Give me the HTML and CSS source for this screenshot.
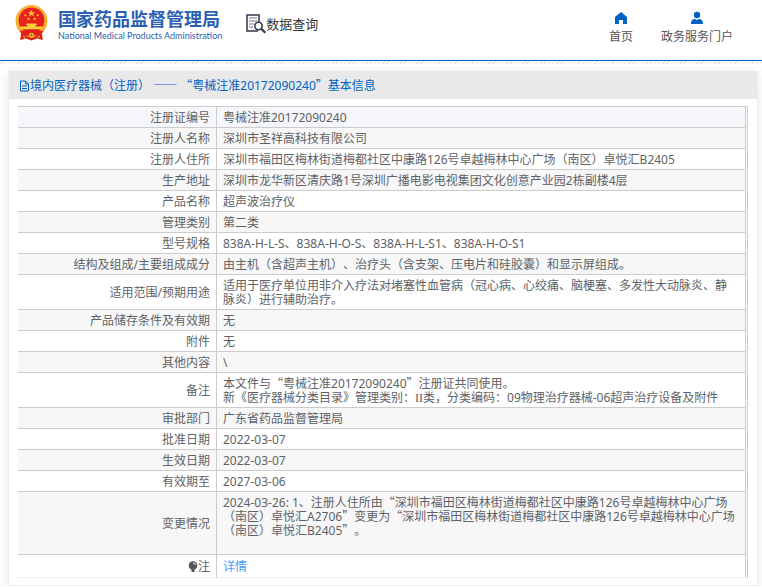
FILE: index.html
```
<!DOCTYPE html>
<html lang="zh-CN">
<head>
    <meta charset="UTF-8">
    <title>国家药品监督管理局 数据查询</title>
    <link rel="stylesheet" href="styles.css">
</head>
<body>
<header class="header">
    <a class="logo" href="#">
        <svg class="emblem" viewBox="0 0 64 70" aria-hidden="true">
            <path d="M12 54 L10 68 L22 65 L32 69 L42 65 L54 68 L52 54 Z" fill="#e0201b"/>
            <circle cx="32" cy="31" r="31" fill="#f3b632"/>
            <circle cx="32" cy="31" r="29" fill="none" stroke="#eda52c" stroke-width="2" stroke-dasharray="3 3"/>
            <circle cx="32" cy="30" r="25" fill="#e8211c"/>
            <path d="M32 9l2 5h5l-4 3 2 5-5-3-5 3 2-5-4-3h5z" fill="#f9cf3c"/>
            <g fill="#f9cf3c">
                <circle cx="20" cy="20" r="2"/>
                <circle cx="26" cy="27" r="2"/>
                <circle cx="38" cy="27" r="2"/>
                <circle cx="44" cy="20" r="2"/>
                <path d="M23 36h18l2 3h-3v3h13v5H11v-5h13v-3h-3z"/>
            </g>
            <path d="M9 50h46l-5 10H14z" fill="#e0201b"/>
            <circle cx="32" cy="59" r="5" fill="#f3b632"/>
            <circle cx="32" cy="59" r="2" fill="#e0201b"/>
            <path d="M16 60l4 5M48 60l-4 5" fill="none" stroke="#f3b632" stroke-width="2"/>
        </svg>
        <span class="logo-text">
            <strong class="logo-cn">国家药品监督管理局</strong>
            <span class="logo-en">National Medical Products Administration</span>
        </span>
    </a>
    <a class="search-title" href="#">
        <svg class="search-icon" viewBox="0 0 20 20" aria-hidden="true">
            <path d="M12 17H1V1h12v7" fill="none" stroke="#34344e" stroke-width="1.5"/>
            <path d="M3 4h8M3 7h8M3 10h5M3 13h4" stroke="#77778a" stroke-width="1.2"/>
            <circle cx="12.5" cy="12" r="3.7" fill="#fff" stroke="#34344e" stroke-width="1.6"/>
            <path d="M15.3 14.8l4 4" stroke="#34344e" stroke-width="2.2"/>
        </svg>
        <span>数据查询</span>
    </a>
    <nav class="nav">
        <a href="#">
            <svg class="nav-icon" viewBox="0 0 14 14" aria-hidden="true">
                <path d="M7 1l6 5v7H9V9H5v4H1V6z" fill="#0062c4"/>
            </svg>
            首页
        </a>
        <a href="#">
            <svg class="nav-icon" viewBox="0 0 14 14" aria-hidden="true">
                <circle cx="7" cy="4" r="3.2" fill="#0062c4"/>
                <path d="M1 13c0-4 2-5 4-5l2 1 2-1c2 0 4 1 4 5z" fill="#0062c4"/>
            </svg>
            政务服务门户
        </a>
    </nav>
</header>
<div class="stripe"></div>

<main class="card">
    <h1 class="card-title">
        <svg class="doc-icon" viewBox="0 0 11 12" aria-hidden="true">
            <path d="M1.5 1h5l3 3v7h-8zM6.5 1v3h3M3 6h5M3 8.500h5" fill="none" stroke="#0062c4"/>
        </svg>
        <span>境内医疗器械（注册） <span class="cjk">——</span> <span class="cjk">“</span>粤械注准20172090240<span class="cjk">”</span>基本信息</span>
    </h1>
    <div class="card-body">
        <table class="info">
            <tbody>
                <tr><th scope="row">注册证编号</th><td>粤械注准20172090240</td></tr>
                <tr><th scope="row">注册人名称</th><td>深圳市圣祥高科技有限公司</td></tr>
                <tr><th scope="row">注册人住所</th><td>深圳市福田区梅林街道梅都社区中康路126号卓越梅林中心广场（南区）卓悦汇B2405</td></tr>
                <tr><th scope="row">生产地址</th><td>深圳市龙华新区清庆路1号深圳广播电影电视集团文化创意产业园2栋副楼4层</td></tr>
                <tr><th scope="row">产品名称</th><td>超声波治疗仪</td></tr>
                <tr><th scope="row">管理类别</th><td>第二类</td></tr>
                <tr><th scope="row">型号规格</th><td>838A-H-L-S、838A-H-O-S、838A-H-L-S1、838A-H-O-S1</td></tr>
                <tr><th scope="row">结构及组成/主要组成成分</th><td>由主机（含超声主机）、治疗头（含支架、压电片和硅胶囊）和显示屏组成。</td></tr>
                <tr><th scope="row">适用范围/预期用途</th><td>适用于医疗单位用非介入疗法对堵塞性血管病（冠心病、心绞痛、脑梗塞、多发性大动脉炎、静脉炎）进行辅助治疗。</td></tr>
                <tr><th scope="row">产品储存条件及有效期</th><td>无</td></tr>
                <tr><th scope="row">附件</th><td>无</td></tr>
                <tr><th scope="row">其他内容</th><td>\</td></tr>
                <tr><th scope="row">备注</th><td>本文件与<span class="cjk">“</span>粤械注准20172090240<span class="cjk">”</span>注册证共同使用。<br>新《医疗器械分类目录》管理类别：<span class="roman">II</span>类，分类编码：09物理治疗器械-06超声治疗设备及附件</td></tr>
                <tr><th scope="row">审批部门</th><td>广东省药品监督管理局</td></tr>
                <tr><th scope="row">批准日期</th><td>2022-03-07</td></tr>
                <tr><th scope="row">生效日期</th><td>2022-03-07</td></tr>
                <tr><th scope="row">有效期至</th><td>2027-03-06</td></tr>
                <tr><th scope="row">变更情况</th><td>2024-03-26: 1、注册人住所由<span class="cjk">“</span>深圳市福田区梅林街道梅都社区中康路126号卓越梅林中心广场（南区）卓悦汇A2706<span class="cjk">”</span>变更为<span class="cjk">“</span>深圳市福田区梅林街道梅都社区中康路126号卓越梅林中心广场（南区）卓悦汇B2405<span class="cjk">”</span>。<br><br></td></tr>
                <tr class="note">
                    <th scope="row"><svg class="bulb-icon" viewBox="0 0 10 12" aria-hidden="true"><circle cx="5" cy="4.500" r="4.300" fill="#555"/><path d="M3.500 8h3v3h-3z" fill="#555"/><path d="M5 2q2 0 2.500 2" fill="none" stroke="#fff"/></svg>注</th>
                    <td><a href="#">详情</a></td>
                </tr>
            </tbody>
        </table>
    </div>
</main>
</body>
</html>
```

FILE: styles.css
```
:root {
    --primary-color: #0062c4;
    --logo-color: #2b5fb3;
    --text-color: #606266;
    --line-color: #ccc;
}

* {
    box-sizing: border-box;
}

body {
    margin: 0;
    font-family: "Noto Sans", "Noto Sans CJK SC", sans-serif;
    font-size: 12px;
    line-height: 14px;
    color: #555;
    background-color: #fff;
    text-spacing-trim: space-all;
}

a {
    color: inherit;
    text-decoration: none;
}

.header {
    display: flex;
    align-items: flex-start;
    height: 61px;
    padding: 5px 29px 0 15px;
    border-bottom: 1px solid var(--primary-color);
}

.stripe {
    height: 3px;
    background: repeating-linear-gradient(135deg, #fff 0 2px, #e4e4e4 2px 3px);
}

.logo {
    display: flex;
    gap: 10px;
    color: var(--logo-color);
    white-space: nowrap;
}

.emblem {
    flex: none;
    width: 33px;
    height: 36px;
}

.logo-text {
    display: flex;
    flex-direction: column;
    padding-top: 4px;
}

.logo-cn {
    font-size: 18px;
    line-height: 20px;
}

.logo-en {
    font-family: Lato, sans-serif;
    font-size: 9px;
    line-height: 14px;
}

.search-title {
    display: flex;
    align-items: center;
    margin: 9px 0 0 24px;
    font-size: 13px;
    line-height: 20px;
    color: #333;
}

.search-icon {
    width: 20px;
    height: 20px;
}

.nav {
    display: flex;
    gap: 28px;
    margin-left: auto;
    padding-top: 6px;
}

.nav a {
    display: flex;
    flex-direction: column;
    align-items: center;
    gap: 5px;
}

.nav-icon {
    width: 14px;
    height: 14px;
}

.card {
    margin: 7px 4px 0 8px;
    border: 1px solid #ebeef5;
    border-top: 0;
    box-shadow: 0 2px 12px rgba(0, 0, 0, 0.1);
}

.card-title {
    display: flex;
    align-items: center;
    height: 28px;
    margin: 0;
    padding: 2px 10px 0;
    font-size: 12px;
    font-weight: normal;
    color: var(--primary-color);
    background-color: #e9e9e9;
}

.doc-icon {
    width: 11px;
    height: 12px;
}

.cjk {
    font-family: "Noto Sans CJK SC", sans-serif;
    line-height: 12px;
}

.roman {
    font-family: "Liberation Serif", serif;
    line-height: 12px;
}

.card-body {
    padding: 7px 9px;
}

.info {
    width: 100%;
    table-layout: fixed;
    border-collapse: separate;
    border-spacing: 0;
    padding-right: 1px;
    border-top: 1px solid var(--line-color);
    border-right: 1px solid var(--line-color);
    color: var(--text-color);
}

.info th,
.info td {
    padding: 4px 6px 2px;
    border-right: 1px solid var(--line-color);
    border-bottom: 1px solid var(--line-color);
    vertical-align: middle;
}

.info th {
    width: 199px;
    font-weight: normal;
    text-align: right;
}

.info td {
    padding-right: 8px;
}

.info tr:nth-child(even) {
    background-color: #f7f7f7;
}

.info tr:first-child {
    background-color: #f5f7fa;
}

.info .note th,
.info .note td {
    height: 23px;
    border-bottom-color: #ebeef5;
}

.note a {
    color: #409eff;
}

.bulb-icon {
    width: 10px;
    height: 12px;
    vertical-align: -2px;
}
```
